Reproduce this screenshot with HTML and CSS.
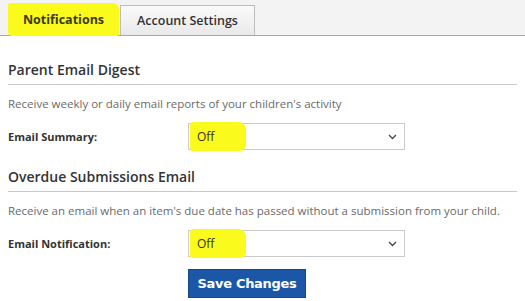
FILE: index.html
```html
<!DOCTYPE html>
<html>
<head>
<meta charset="utf-8">
<link rel="stylesheet" href="styles.css">
</head>
<body>
<div class="tabbar">
  <div class="tab active">Notifications</div>
  <div class="tab">Account Settings</div>
</div>
<div class="content">
  <section class="sec first">
    <h2 class="heading">Parent Email Digest</h2>
    <p class="desc">Receive weekly or daily email reports of your children's activity</p>
    <div class="row">
      <label class="label">Email Summary:</label>
      <div class="select">
        <span class="mark">Off</span>
        <svg class="chev" width="9" height="6" viewBox="0 0 9 6"><path d="M1 1 L4.5 4.5 L8 1" fill="none" stroke="#444" stroke-width="1.3"/></svg>
      </div>
    </div>
  </section>
  <section class="sec">
    <h2 class="heading">Overdue Submissions Email</h2>
    <p class="desc">Receive an email when an item's due date has passed without a submission from your child.</p>
    <div class="row">
      <label class="label">Email Notification:</label>
      <div class="select">
        <span class="mark">Off</span>
        <svg class="chev" width="9" height="6" viewBox="0 0 9 6"><path d="M1 1 L4.5 4.5 L8 1" fill="none" stroke="#444" stroke-width="1.3"/></svg>
      </div>
    </div>
    <div class="row btnrow">
      <span class="label"></span>
      <button class="save">Save Changes</button>
    </div>
  </section>
</div>
</body>
</html>
```
FILE: styles.css
```css
* { box-sizing: border-box; }
body {
  margin: 0;
  background: #fff;
  font-family: "Open Sans", "DejaVu Sans", sans-serif;
  color: #333;
}
.tabbar {
  height: 36px;
  background: #f3f3f3;
  border-bottom: 1px solid #a8a8a8;
  display: flex;
  align-items: flex-end;
  padding-left: 8px;
}
.tab {
  height: 30px;
  padding: 0;
  white-space: nowrap;
  display: flex;
  align-items: center;
  justify-content: center;
  font-size: 12.5px;
  font-weight: 600;
  color: #333;
  background: linear-gradient(#fafafa, #e9e9e9);
  border: 1px solid #bdbdbd;
  border-bottom: none;
  margin-left: 1px;
  width: 135px;
}
.tab.active {
  height: 33px;
  width: 111px;
  margin-left: 0;
  margin-bottom: -1px;
  background: #fafa1c;
  border: none;
  border-radius: 3px 6px 2px 4px;
  font-weight: 700;
  color: #3a3a1a;
}
.content { padding: 0 8px; }
.sec { display: flex; flex-direction: column; }
.heading {
  margin: 17px 0 0;
  font-size: 14px;
  font-weight: 600;
  line-height: 20px;
  padding-bottom: 4px;
  border-bottom: 1px solid #c9c9c9;
  color: #333;
}
.first .heading { margin-top: 24px; }
.desc {
  margin: 11px 0 0;
  font-size: 11.5px;
  line-height: 16px;
  color: #6a6a6a;
  white-space: nowrap;
}
.row {
  display: flex;
  align-items: center;
  margin-top: 11px;
}
.btnrow { margin-top: 12px; }
.label {
  width: 180px;
  font-size: 11px;
  font-weight: 700;
  color: #333;
}
.select {
  width: 217px;
  height: 27px;
  border: 1px solid #cacaca;
  display: flex;
  align-items: center;
  justify-content: space-between;
  padding-right: 7px;
}
.mark {
  align-self: stretch;
  margin: -2px 0 -2px 1px;
  width: 56px;
  padding-left: 7px;
  display: flex;
  align-items: center;
  background: #fafa1c;
  border-radius: 4px 8px 6px 3px;
  font-size: 12px;
  color: #333;
}
.save {
  width: 118px;
  height: 29px;
  border: 1px solid #15478f;
  background: #1b57a6;
  color: #fff;
  font-family: "DejaVu Sans", sans-serif;
  font-weight: 700;
  font-size: 13px;
  letter-spacing: -0.3px;
  padding: 0;
}
```
